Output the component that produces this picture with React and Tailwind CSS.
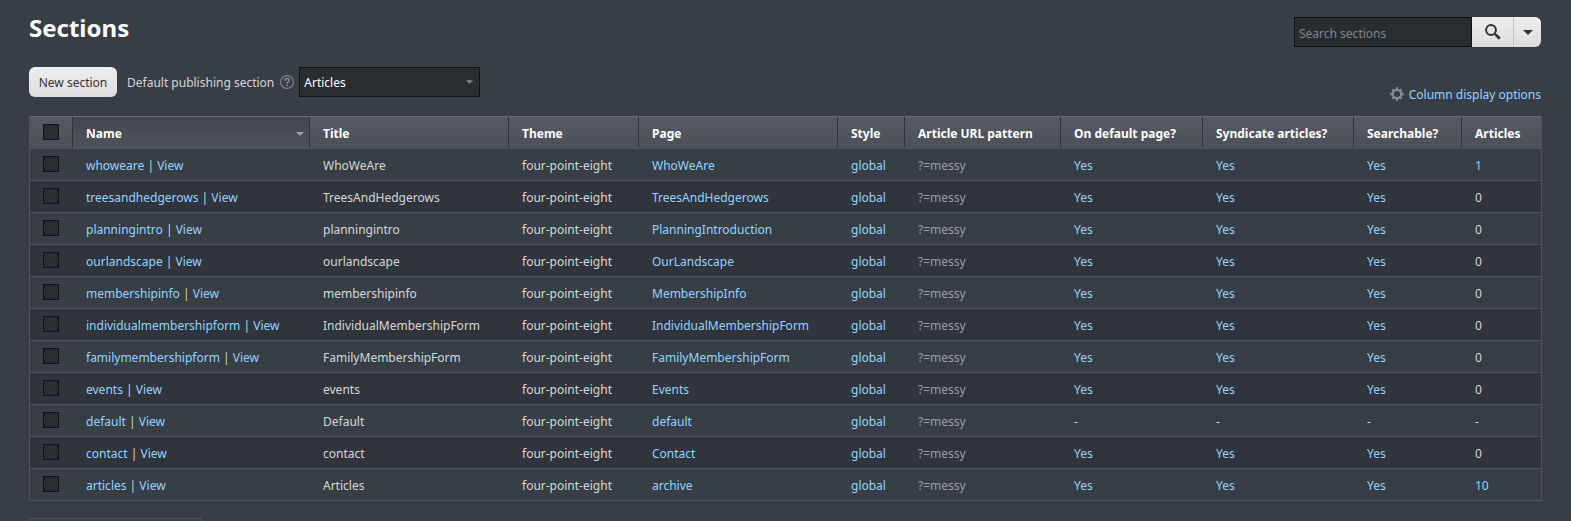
const sections = [
  { name: "whoweare", title: "WhoWeAre", page: "WhoWeAre", articles: 1 },
  { name: "treesandhedgerows", title: "TreesAndHedgerows", page: "TreesAndHedgerows", articles: 0 },
  { name: "planningintro", title: "planningintro", page: "PlanningIntroduction", articles: 0 },
  { name: "ourlandscape", title: "ourlandscape", page: "OurLandscape", articles: 0 },
  { name: "membershipinfo", title: "membershipinfo", page: "MembershipInfo", articles: 0 },
  { name: "individualmembershipform", title: "IndividualMembershipForm", page: "IndividualMembershipForm", articles: 0 },
  { name: "familymembershipform", title: "FamilyMembershipForm", page: "FamilyMembershipForm", articles: 0 },
  { name: "events", title: "events", page: "Events", articles: 0 },
  { name: "default", title: "Default", page: "default", articles: null },
  { name: "contact", title: "contact", page: "Contact", articles: 0 },
  { name: "articles", title: "Articles", page: "archive", articles: 10 },
];

const columns = [
  { label: "Name", width: "w-[237px]", sorted: true },
  { label: "Title", width: "w-[199px]" },
  { label: "Theme", width: "w-[130px]" },
  { label: "Page", width: "w-[199px]" },
  { label: "Style", width: "w-[67px]" },
  { label: "Article URL pattern", width: "w-[156px]" },
  { label: "On default page?", width: "w-[142px]" },
  { label: "Syndicate articles?", width: "w-[151px]" },
  { label: "Searchable?", width: "w-[108px]" },
  { label: "Articles", width: "w-[79px]" },
];

function Caret({ className }) {
  return (
    <svg viewBox="0 0 8 4" className={className} fill="currentColor" aria-hidden="true">
      <path d="M0 0h8L4 4z" />
    </svg>
  );
}

function Gear() {
  return (
    <svg viewBox="0 0 14 14" className="size-[14px] text-[#858b95]" fill="none" stroke="currentColor" aria-hidden="true">
      <circle cx="7" cy="7" r="4.2" strokeWidth="2.2" />
      <path
        strokeWidth="2.4"
        d="M7 .3v2M7 11.7v2M.3 7h2M11.7 7h2M2.4 2.4l1.3 1.3M10.3 10.3l1.3 1.3M2.4 11.6l1.3-1.3M10.3 3.7l1.3-1.3"
      />
    </svg>
  );
}

function HelpIcon() {
  return (
    <svg viewBox="0 0 14 14" className="size-[14px]" fill="none" stroke="currentColor" aria-hidden="true">
      <circle cx="7" cy="7" r="6.4" strokeWidth="1.1" />
      <path d="M4.9 5.5c0-1.3 1-2 2.1-2s2.1.7 2.1 1.8c0 1.5-2 1.5-2 3.1" strokeWidth="1.6" />
      <path d="M7.05 9.4V11" strokeWidth="1.7" />
    </svg>
  );
}

function SearchIcon() {
  return (
    <svg viewBox="0 0 16 16" className="size-4" fill="none" stroke="currentColor" aria-hidden="true">
      <circle cx="6" cy="6" r="4.9" strokeWidth="2" />
      <path d="M9.5 9.5l1.6 1.6" strokeWidth="1.8" />
      <path d="M10.8 10.8l3.9 3.9" strokeWidth="2.8" />
    </svg>
  );
}

function Tick({ label }) {
  return (
    <input
      type="checkbox"
      aria-label={label}
      className="block size-4 appearance-none border border-[#111315] bg-[#292d30] checked:bg-[#8cd2ff]"
    />
  );
}

function Link({ children }) {
  return (
    <a href="#" className="text-[#93d3ff] hover:underline">
      {children}
    </a>
  );
}

function Cell({ children, className = "" }) {
  return <td className={"px-[13px] pt-0.5 " + className}>{children}</td>;
}

function YesCell({ on }) {
  return <Cell>{on ? <Link>Yes</Link> : "-"}</Cell>;
}

function SectionRow({ section }) {
  const listed = section.articles !== null;
  return (
    <tr className="h-8 even:bg-[#30343c] [&>td]:border-t [&>td]:border-[#4f535b]">
      <td className="pb-px pl-[13px]">
        <Tick label={"Select " + section.name} />
      </td>
      <Cell>
        <Link>{section.name}</Link> | <Link>View</Link>
      </Cell>
      <Cell>{section.title}</Cell>
      <Cell>four-point-eight</Cell>
      <Cell>
        <Link>{section.page}</Link>
      </Cell>
      <Cell>
        <Link>global</Link>
      </Cell>
      <Cell className="text-[#999da3]">?=messy</Cell>
      <YesCell on={listed} />
      <YesCell on={listed} />
      <YesCell on={listed} />
      <Cell>
        {!listed ? "-" : section.articles > 0 ? <Link>{section.articles}</Link> : section.articles}
      </Cell>
    </tr>
  );
}

export default function App() {
  return (
    <div className="h-screen overflow-hidden bg-[#383e46] font-['Segoe_UI','Noto_Sans',sans-serif] text-xs leading-5 text-[#d6d6d6]">
      <main className="pr-[30px] pl-[29px]">
        <header className="flex items-start justify-between pt-3">
          <h1 className="text-2xl leading-8 font-bold text-white">Sections</h1>
          <form className="flex pt-[5px]" onSubmit={(e) => e.preventDefault()}>
            <input
              type="search"
              aria-label="Search sections"
              placeholder="Search sections"
              className="h-[30px] w-[178px] border border-[#111315] bg-[#292d30] px-1 pt-0.5 text-white placeholder:text-[#808386]"
            />
            <button
              type="submit"
              aria-label="Search"
              className="flex h-[30px] w-[41px] items-center justify-center bg-linear-to-b from-[#eeeeee] to-[#dddddd] text-[#333333]"
            >
              <SearchIcon />
            </button>
            <button
              type="button"
              aria-label="Search options"
              className="flex h-[30px] w-7 items-center justify-center rounded-r-md border-l border-[#c4c4c4] bg-linear-to-b from-[#eeeeee] to-[#dddddd] text-[#333333]"
            >
              <Caret className="h-[5px] w-[10px]" />
            </button>
          </form>
        </header>

        <div className="flex items-start justify-between pt-5">
          <div className="flex items-center">
            <button
              type="button"
              className="h-[30px] w-[88px] rounded-md bg-linear-to-b from-[#eeeeee] to-[#dddddd] pt-0.5 text-[#333333]"
            >
              New section
            </button>
            <label htmlFor="default-section" className="ml-[10px] pt-0.5">
              Default publishing section
            </label>
            <a href="#" aria-label="Help" className="ml-[6px] text-[#858b95]">
              <HelpIcon />
            </a>
            <div className="ml-[5px] grid w-[181px] items-center">
              <select
                id="default-section"
                className="col-start-1 row-start-1 h-[30px] appearance-none border border-[#111315] bg-[#292d30] px-1 pt-0.5 text-white"
              >
                <option>Articles</option>
              </select>
              <Caret className="pointer-events-none col-start-1 row-start-1 mr-[7px] h-1 w-[7px] justify-self-end text-[#858b95]" />
            </div>
          </div>
          <a href="#" className="mt-4 flex items-center gap-[5px] text-[#93d3ff]">
            <Gear />
            <span className="pt-0.5">Column display options</span>
          </a>
        </div>

        <table className="mt-[11px] w-full table-fixed border-separate border-spacing-0 border-x border-b border-[#4f535b] whitespace-nowrap">
          <thead>
            <tr className="h-8 text-left text-white">
              <th className="w-[43px] border-t border-r border-t-[#676b73] border-r-[#30343c] bg-linear-to-b from-[#565a62] to-[#4b4f57] pb-px pl-[13px]">
                <Tick label="Select all sections" />
              </th>
              {columns.map((c) => (
                <th
                  key={c.label}
                  className={
                    c.width +
                    " border-t border-r border-t-[#676b73] border-r-[#30343c] pt-0.5 pl-[13px] font-bold last:border-r-0 bg-linear-to-b " +
                    (c.sorted ? "from-[#42464e] to-[#4f535b]" : "from-[#565a62] to-[#4b4f57]")
                  }
                >
                  {c.sorted ? (
                    <span className="flex items-center justify-between pr-[5px]">
                      {c.label}
                      <Caret className="h-1 w-2 text-[#9a9ea6]" />
                    </span>
                  ) : (
                    c.label
                  )}
                </th>
              ))}
            </tr>
          </thead>
          <tbody>
            {sections.map((s) => (
              <SectionRow key={s.name} section={s} />
            ))}
          </tbody>
        </table>

        <div className="mt-[17px] h-[30px] w-[172px] border border-[#4f535b]" />
      </main>
    </div>
  );
}
